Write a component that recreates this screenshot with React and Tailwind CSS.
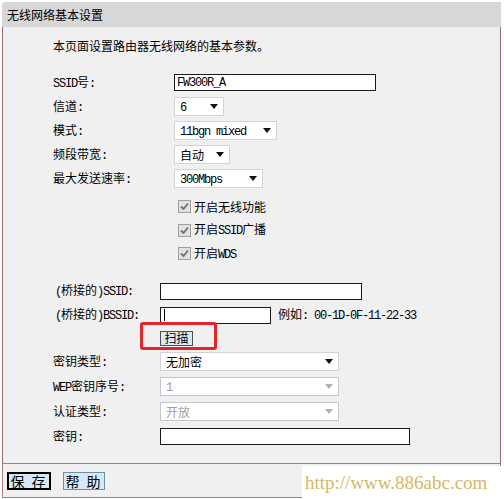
import React from 'react'

// ── Mixed text: ASCII runs in a narrow mono face (SimSun-like half width) ──
function T({ s }) {
  const parts = s.split(/([\x00-\x7f]+)/).filter(Boolean)
  return (
    <>
      {parts.map((p, i) =>
        /^[\x00-\x7f]+$/.test(p) ? (
          <span key={i} className="font-['Liberation_Mono',monospace] text-[12px] tracking-[-1.2px] whitespace-pre">
            {p}
          </span>
        ) : (
          <span key={i}>{p}</span>
        )
      )}
    </>
  )
}

function Input({ w, value, caret }) {
  return (
    <div className={`${w} h-[17px] bg-white border border-[#1a1a1a] flex items-center pl-[2px]`}>
      {value && <T s={value} />}
      {caret && <div className="w-px h-[12px] bg-black ml-[1px]" />}
    </div>
  )
}

function Select({ w, value, disabled }) {
  return (
    <div
      className={`${w} h-[19px] bg-white border flex items-center justify-between pl-[5px] pr-[5px] ${
        disabled ? 'border-[#c4c8cc] text-[#a0a0a0]' : 'border-[#d0d3d8] text-black'
      }`}
    >
      <span><T s={value} /></span>
      <svg width="8" height="5" viewBox="0 0 8 5">
        <path d="M0 0 H8 L4 5 Z" fill={disabled ? '#b0b0b0' : '#111'} />
      </svg>
    </div>
  )
}

function Row({ label, lw, h, children }) {
  return (
    <div className={`flex items-center ${h}`}>
      <div className={`${lw} shrink-0`}><T s={label} /></div>
      {children}
    </div>
  )
}

function Check({ label }) {
  return (
    <div className="flex items-center h-[23.5px] pl-[125px] gap-[3px]">
      <div className="w-[13px] h-[13px] border border-[#a0a0a0] bg-[#e2e2e2] flex items-center justify-center">
        <svg width="9" height="9" viewBox="0 0 9 9">
          <path d="M1 4.5 L3.5 7 L8 1.5" stroke="#707070" strokeWidth="1.8" fill="none" />
        </svg>
      </div>
      <span className="text-[12px]"><T s={label} /></span>
    </div>
  )
}

export default function App() {
  return (
    <div className="relative w-[504px] h-[499px] bg-white pl-[2px] pr-[3px] pt-[2px] font-['Noto_Sans_CJK_SC',sans-serif] text-[12px] leading-none text-black">
      {/* Title bar */}
      <div className="h-[25px] bg-[#d7d7d7] rounded-tl-[4px] flex items-center pl-[5px] text-[12px]">
        无线网络基本设置
      </div>

      {/* Body */}
      <div className="relative h-[436px] bg-[#f0f0f0] border-l border-r border-[#9a6a6a] pl-[50px] pt-[9px]">
        <div className="h-[20px] flex items-center">本页面设置路由器无线网络的基本参数。</div>

        <div className="mt-[14.5px]">
          <Row label="SSID号:" lw="w-[121px]" h="h-[24px]">
            <Input w="w-[202px]" value="FW300R_A" />
          </Row>
          <Row label="信道:" lw="w-[121px]" h="h-[24px]">
            <Select w="w-[50px]" value="6" />
          </Row>
          <Row label="模式:" lw="w-[121px]" h="h-[24px]">
            <Select w="w-[103px]" value="11bgn mixed" />
          </Row>
          <Row label="频段带宽:" lw="w-[121px]" h="h-[24px]">
            <Select w="w-[56px]" value="自动" />
          </Row>
          <Row label="最大发送速率:" lw="w-[121px]" h="h-[24px]">
            <Select w="w-[89px]" value="300Mbps" />
          </Row>
        </div>

        <div className="mt-[4.5px]">
          <Check label="开启无线功能" />
          <Check label="开启SSID广播" />
          <Check label="开启WDS" />
        </div>

        <div className="mt-[13.75px]">
          <Row label="(桥接的)SSID:" lw="w-[107px] pl-[2px]" h="h-[24px]">
            <Input w="w-[202px]" />
          </Row>
          <Row label="(桥接的)BSSID:" lw="w-[107px] pl-[2px]" h="h-[24px]">
            <Input w="w-[111px]" caret />
            <span className="ml-[7px]"><T s="例如: 00-1D-0F-11-22-33" /></span>
          </Row>
          <div className="h-[22px] flex items-center pl-[107px]">
            <div className="w-[33px] h-[15px] bg-[#d9ebf7] border border-[#505050] flex items-center justify-center">
              扫描
            </div>
          </div>
          <Row label="密钥类型:" lw="w-[107px]" h="h-[25px]">
            <Select w="w-[179px]" value="无加密" />
          </Row>
          <Row label="WEP密钥序号:" lw="w-[107px]" h="h-[25px]">
            <Select w="w-[179px]" value="1" disabled />
          </Row>
          <Row label="认证类型:" lw="w-[107px]" h="h-[25px]">
            <Select w="w-[179px]" value="开放" disabled />
          </Row>
          <Row label="密钥:" lw="w-[107px]" h="h-[25px]">
            <Input w="w-[250px]" />
          </Row>
        </div>

        {/* Red annotation box around the scan button */}
        <div className="absolute left-[137px] top-[295px] w-[77px] h-[28px] border-[3px] border-[#e3262b] rounded-[3px]" />
      </div>

      {/* Footer */}
      <div className="h-[35px] bg-[#f0f0f0] border border-[#b07a7a] flex items-start pl-[4px] pt-[8px] gap-[12px]">
        <div className="w-[44px] h-[18px] bg-[#d5e8f5] border-2 border-black flex items-center justify-center text-[14px] tracking-[2px]">
          保 存
        </div>
        <div className="w-[42px] h-[18px] bg-[#d5e8f5] border border-[#6f8fa8] flex items-center justify-center text-[14px] tracking-[2px]">
          帮 助
        </div>
      </div>

      {/* Watermark */}
      <div className="absolute left-[302px] top-[466px] w-[202px] h-[33px] bg-white flex items-center pl-[3px] font-['Liberation_Serif',serif] text-[19px] text-[#d6b766]">
        http://www.886abc.com
      </div>
    </div>
  )
}
